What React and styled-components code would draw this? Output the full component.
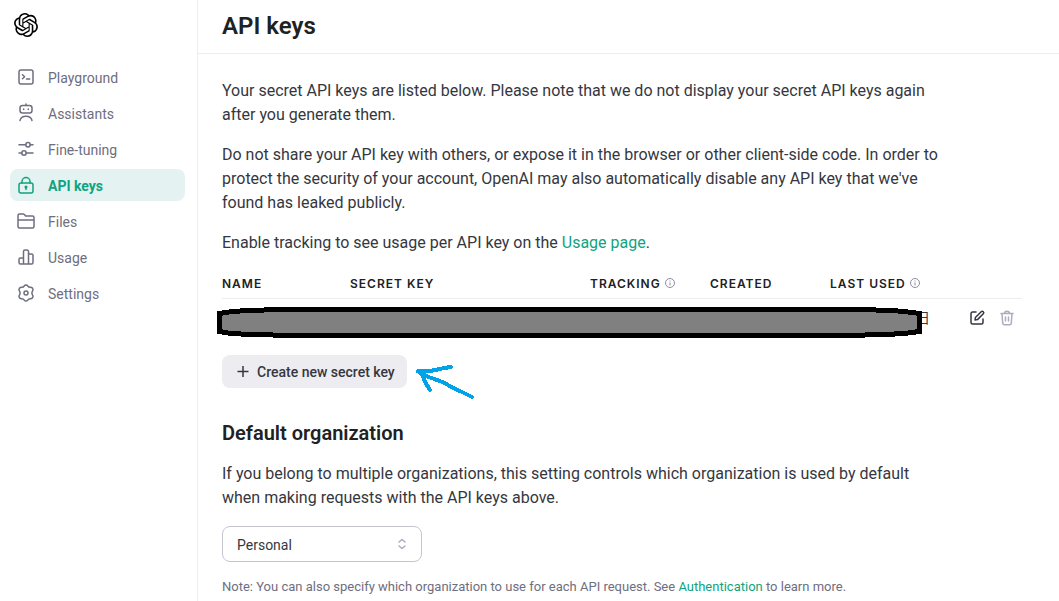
import React, { useState } from "react";
import styled, { createGlobalStyle } from "styled-components";
import { SiOpenai } from "react-icons/si";

const GlobalStyle = createGlobalStyle`
  * {
    box-sizing: border-box;
  }

  body {
    margin: 0;
    background: #fff;
    color: #353740;
    font-family: Roboto, "Liberation Sans", sans-serif;
    font-size: 16px;
    line-height: 24px;
  }
`;

const Layout = styled.div`
  display: flex;
  min-height: 100vh;
`;

const Sidebar = styled.aside`
  flex: 0 0 198px;
  border-right: 1px solid #ececf1;
  padding: 13px 12px 0 10px;
`;

const Logo = styled.a`
  display: flex;
  width: 24px;
  margin: 0 0 24px 4px;
  color: #000;
`;

const Nav = styled.nav`
  display: flex;
  flex-direction: column;
  gap: 4px;
`;

const NavLink = styled.a`
  display: flex;
  align-items: center;
  gap: 12px;
  height: 32px;
  padding: 0 6px;
  border-radius: 8px;
  font-size: 14px;
  text-decoration: none;
  font-weight: ${(p) => (p.$active ? 700 : 400)};
  color: ${(p) => (p.$active ? "#10a37f" : "#6e6e80")};
  background: ${(p) => (p.$active ? "#e4f2f1" : "transparent")};
`;

const NavLabel = styled.span`
  padding-top: 2px;
`;

const Icon = styled.svg`
  flex: none;
  width: 20px;
  height: 20px;
  fill: none;
  stroke: currentColor;
  stroke-width: 1.5;
  stroke-linecap: round;
  stroke-linejoin: round;
`;

const Main = styled.main`
  flex: 1;
  min-width: 0;
  overflow: hidden;
`;

const PageHeader = styled.header`
  height: 54px;
  padding: 10px 24px 0;
  border-bottom: 1px solid #ececf1;
`;

const PageTitle = styled.h1`
  margin: 0;
  color: #202123;
  font-size: 24px;
  line-height: 32px;
  font-weight: 600;
`;

const Content = styled.div`
  max-width: 848px;
  padding: 25px 24px 0;
`;

const Paragraph = styled.p`
  max-width: 720px;
  margin: 0 0 16px;
`;

const TextLink = styled.a`
  color: #10a37f;
  text-decoration: none;
`;

const TableWrap = styled.div`
  position: relative;
  margin-bottom: 18px;
`;

const Table = styled.table`
  width: 100%;
  table-layout: fixed;
  border-collapse: separate;
  border-spacing: 0;
`;

const HeadCell = styled.th`
  width: ${(p) => p.$width};
  height: 28px;
  padding: 0;
  border-bottom: 1px solid #ececf1;
  color: #202123;
  font-family: Inter, sans-serif;
  font-size: 12px;
  line-height: 26px;
  font-weight: 600;
  letter-spacing: 1px;
  text-align: left;
  text-transform: uppercase;
  vertical-align: top;
  white-space: nowrap;
`;

const InfoSvg = styled.svg`
  width: 12px;
  height: 12px;
  margin-left: 3px;
  vertical-align: -1px;
  fill: none;
  stroke: #8e8ea0;
`;

const Cell = styled.td`
  height: 38px;
  padding: 0 12px 0 0;
  font-size: 14px;
  font-family: "Liberation Sans", "Noto Sans CJK JP", sans-serif;
  text-align: right;
`;

const ActionCell = styled(Cell)`
  padding: 0 5px 0 0;
`;

const RowActions = styled.div`
  display: flex;
  justify-content: flex-end;
  gap: 10px;
`;

const IconButton = styled.button`
  display: flex;
  padding: 0;
  border: 0;
  background: none;
  color: ${(p) => (p.$muted ? "#acacbe" : "#353740")};
`;

const Redaction = styled.svg`
  position: absolute;
  left: -6px;
  bottom: -2px;
  width: 708px;
  height: 34px;
  fill: #808080;
  stroke: #000;
  stroke-width: 5;
`;

const CreateRow = styled.div`
  position: relative;
  display: flex;
  margin-bottom: 32px;
`;

const CreateButton = styled.button`
  display: flex;
  align-items: center;
  gap: 7px;
  height: 33px;
  padding: 0 12px;
  border: 0;
  border-radius: 8px;
  background: #ececf1;
  color: #353740;
  font: 500 14px/24px Roboto, "Liberation Sans", sans-serif;
  white-space: nowrap;
`;

const Arrow = styled.svg`
  position: absolute;
  left: 192px;
  top: 8px;
  width: 62px;
  height: 36px;
  fill: none;
  stroke: #00a2e8;
  stroke-width: 4;
  stroke-linecap: round;
  stroke-linejoin: round;
`;

const SectionTitle = styled.h2`
  margin: 0 0 16px;
  color: #202123;
  font-size: 20px;
  line-height: 26px;
  font-weight: 600;
`;

const SelectWrap = styled.div`
  position: relative;
  width: 200px;
  margin-bottom: 13px;
`;

const Select = styled.select`
  display: block;
  width: 100%;
  height: 36px;
  padding: 2px 14px 0;
  appearance: none;
  border: 1px solid #c5c5d2;
  border-radius: 8px;
  background: #fff;
  color: #353740;
  font: 400 14px/24px Roboto, "Liberation Sans", sans-serif;
`;

const SelectArrows = styled.svg`
  position: absolute;
  right: 14px;
  top: 12px;
  width: 12px;
  height: 12px;
  fill: none;
  stroke: #acacbe;
  stroke-width: 1.5;
  stroke-linecap: round;
  stroke-linejoin: round;
  pointer-events: none;
`;

const Note = styled.p`
  margin: 0;
  color: #6e6e80;
  font-size: 13px;
  line-height: 24px;
`;

const icons = {
  playground: (
    <>
      <rect x="3" y="3" width="14" height="14" rx="2" />
      <path d="M6.5 7.8 8.6 9.8 6.5 11.8M10.5 12h3.2" />
    </>
  ),
  assistants: (
    <>
      <rect x="4" y="2.5" width="12" height="7.5" rx="2.5" />
      <path d="M10 1v1.5M7.7 6v.6M12.3 6v.6M4 17.5c.6-2.8 2.8-4.2 6-4.2s5.4 1.4 6 4.2" />
    </>
  ),
  tuning: (
    <>
      <circle cx="12" cy="5.7" r="2.2" />
      <circle cx="8" cy="14" r="2.2" />
      <path d="M3 5.7h6.8M14.2 5.7H17M3 14h2.8M10.2 14H17" />
    </>
  ),
  keys: (
    <>
      <rect x="3" y="8" width="14" height="10" rx="2" />
      <path d="M6 8V6.5a4 4 0 0 1 8 0V8M10 12.3v2.2" />
      <circle cx="10" cy="12" r=".8" fill="currentColor" />
    </>
  ),
  files: (
    <path d="M2 9h16M2 15.5V4.5A1.5 1.5 0 0 1 3.5 3h3.6c.6 0 1 .2 1.3.6L9.6 5h6.9A1.5 1.5 0 0 1 18 6.5v9a1.5 1.5 0 0 1-1.5 1.5h-13A1.5 1.5 0 0 1 2 15.5Z" />
  ),
  usage: (
    <path d="M7.5 17H4.5A1.5 1.5 0 0 1 3 15.5v-3A1.5 1.5 0 0 1 4.5 11h3M12.5 17h-5V4.5A1.5 1.5 0 0 1 9 3h2a1.5 1.5 0 0 1 1.5 1.5ZM12.5 7h3A1.5 1.5 0 0 1 17 8.5v7a1.5 1.5 0 0 1-1.5 1.5h-3" />
  ),
  settings: (
    <>
      <circle cx="10" cy="10" r="2" />
      <path d="M8.3 2.8C9 1.6 11 1.6 11.7 2.8c.6 1.1 1.4 1.5 2.6 1.5 2 0 3.2 1.5 2.5 3.1-.5 1.2-.9 1.6-.9 2.6s.4 1.4.9 2.6c.7 1.6-.5 3.1-2.5 3.1-1.2 0-2 .4-2.6 1.5-.7 1.2-2.7 1.2-3.4 0-.6-1.1-1.4-1.5-2.6-1.5-2 0-3.2-1.5-2.5-3.1.5-1.2.9-1.6.9-2.6s-.4-1.4-.9-2.6C2.5 5.8 3.7 4.3 5.7 4.3c1.2 0 2-.4 2.6-1.5Z" />
    </>
  ),
};

const navItems = [
  { id: "playground", label: "Playground" },
  { id: "assistants", label: "Assistants" },
  { id: "tuning", label: "Fine-tuning" },
  { id: "keys", label: "API keys" },
  { id: "files", label: "Files" },
  { id: "usage", label: "Usage" },
  { id: "settings", label: "Settings" },
];

const columns = [
  { label: "Name", width: "128px" },
  { label: "Secret key", width: "240px" },
  { label: "Tracking", width: "120px", info: true },
  { label: "Created", width: "120px" },
  { label: "Last used", width: "112px", info: true },
];

const InfoIcon = () => (
  <InfoSvg viewBox="0 0 12 12">
    <circle cx="6" cy="6" r="4.5" />
    <path d="M6 5.5v3M6 3.5v1" />
  </InfoSvg>
);

const App = () => {
  const [organization, setOrganization] = useState("Personal");

  return (
    <>
      <GlobalStyle />
      <Layout>
        <Sidebar>
          <Logo href="#" aria-label="OpenAI">
            <SiOpenai size={24} />
          </Logo>
          <Nav>
            {navItems.map((item) => (
              <NavLink key={item.id} href={`#${item.id}`} $active={item.id === "keys"}>
                <Icon viewBox="0 0 20 20">{icons[item.id]}</Icon>
                <NavLabel>{item.label}</NavLabel>
              </NavLink>
            ))}
          </Nav>
        </Sidebar>
        <Main>
          <PageHeader>
            <PageTitle>API keys</PageTitle>
          </PageHeader>
          <Content>
            <Paragraph>
              Your secret API keys are listed below. Please note that we do not display your
              secret API keys again after you generate them.
            </Paragraph>
            <Paragraph>
              Do not share your API key with others, or expose it in the browser or other
              client-side code. In order to protect the security of your account, OpenAI may
              also automatically disable any API key that we've found has leaked publicly.
            </Paragraph>
            <Paragraph>
              Enable tracking to see usage per API key on the{" "}
              <TextLink href="#usage">Usage page</TextLink>.
            </Paragraph>
            <TableWrap>
              <Table>
                <thead>
                  <tr>
                    {columns.map((column) => (
                      <HeadCell key={column.label} $width={column.width} scope="col">
                        {column.label}
                        {column.info && <InfoIcon />}
                      </HeadCell>
                    ))}
                    <HeadCell as="td" $width="auto" />
                  </tr>
                </thead>
                <tbody>
                  <tr>
                    <Cell colSpan={5}>日</Cell>
                    <ActionCell>
                      <RowActions>
                        <IconButton aria-label="Edit key">
                          <Icon viewBox="0 0 20 20">
                            <path d="M9 4H5.5A1.5 1.5 0 0 0 4 5.5v9A1.5 1.5 0 0 0 5.5 16h9a1.5 1.5 0 0 0 1.5-1.5V11M8 12l.4-2.5 5.8-5.8a1.48 1.48 0 0 1 2.1 2.1l-5.8 5.8Z" />
                          </Icon>
                        </IconButton>
                        <IconButton aria-label="Delete key" $muted>
                          <Icon viewBox="0 0 20 20">
                            <path d="M4 5.5h12M7.5 5.5c0-3 5-3 5 0M5 5.5l.7 9.6c.1 1.1.7 1.7 1.7 1.7h5.2c1 0 1.6-.6 1.7-1.7L15 5.5M8.5 9v4M11.5 9v4" />
                          </Icon>
                        </IconButton>
                      </RowActions>
                    </ActionCell>
                  </tr>
                </tbody>
              </Table>
              <Redaction viewBox="0 0 708 34" shapeRendering="crispEdges">
                <path d="M3.5 8.5 16 6.5 33 5.5 63 4.5H642L677 5.5 697 7.5 703.5 8.5V26.5L692 28 672 29.5 627 30.5H78L35 29.5 15 28.5 3.5 26.5Z" />
              </Redaction>
            </TableWrap>
            <CreateRow>
              <CreateButton>
                <svg width="16" height="16" viewBox="0 0 16 16" stroke="currentColor" strokeWidth="1.5">
                  <path d="M9 2v11M3.5 7.5h11" />
                </svg>
                Create new secret key
              </CreateButton>
              <Arrow viewBox="0 0 62 36" shapeRendering="crispEdges">
                <path d="M4 8H16L21 7 26 6 30 5 37 4M4 8 9 13 11 19 16 27M4 8 12 13 23 17 31 20 37 24 46 28 58 34" />
              </Arrow>
            </CreateRow>
            <SectionTitle>Default organization</SectionTitle>
            <Paragraph>
              If you belong to multiple organizations, this setting controls which organization
              is used by default when making requests with the API keys above.
            </Paragraph>
            <SelectWrap>
              <Select
                aria-label="Default organization"
                value={organization}
                onChange={(e) => setOrganization(e.target.value)}
              >
                <option>Personal</option>
              </Select>
              <SelectArrows viewBox="0 0 12 12">
                <path d="m3 4 3-2.5L9 4M3 8l3 2.5L9 8" />
              </SelectArrows>
            </SelectWrap>
            <Note>
              Note: You can also specify which organization to use for each API request. See{" "}
              <TextLink href="#authentication">Authentication</TextLink> to learn more.
            </Note>
          </Content>
        </Main>
      </Layout>
    </>
  );
};

export default App;
